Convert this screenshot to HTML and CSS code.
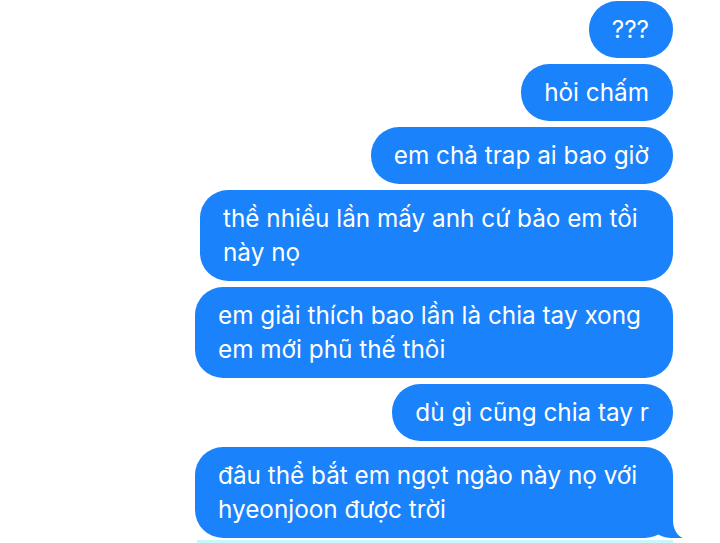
FILE: index.html
```html
<!DOCTYPE html>
<html lang="vi">
<head>
<meta charset="utf-8">
<title>Tin nhắn</title>
<link rel="stylesheet" href="styles.css">
</head>
<body>
<div class="thread">
  <div class="bubble">???</div>
  <div class="bubble">hỏi chấm</div>
  <div class="bubble">em chả trap ai bao giờ</div>
  <div class="bubble bubble-narrow">thề nhiều lần mấy anh cứ bảo em tồi này nọ</div>
  <div class="bubble">em giải thích bao lần là chia tay xong em mới phũ thế thôi</div>
  <div class="bubble">dù gì cũng chia tay r</div>
  <div class="bubble bubble-tail">đâu thể bắt em ngọt ngào này nọ với hyeonjoon được trời</div>
</div>
<div class="underline"></div>
</body>
</html>
```
FILE: styles.css
```css
html, body {
  margin: 0;
  padding: 0;
  background: #ffffff;
  width: 720px;
  height: 543px;
  overflow: hidden;
}
.thread {
  display: flex;
  flex-direction: column;
  align-items: flex-end;
  gap: 6px;
  padding: 1px 47px 0 0;
  font-family: Inter, "Noto Sans", sans-serif;
}
.bubble {
  position: relative;
  box-sizing: border-box;
  max-width: 478px;
  padding: 11px 24px 12px 23px;
  background: #1a82fb;
  color: #ffffff;
  font-size: 24.3px;
  line-height: 34px;
  border-radius: 28px;
}
.bubble-narrow {
  max-width: 473px;
}
.bubble-tail::before {
  content: "";
  position: absolute;
  right: -9px;
  bottom: 0;
  width: 28px;
  height: 30px;
  background: #1a82fb;
  border-bottom-left-radius: 18px 10px;
}
.bubble-tail::after {
  content: "";
  position: absolute;
  right: -24px;
  bottom: 0;
  width: 24px;
  height: 32px;
  background: #ffffff;
  border-bottom-left-radius: 12px 18px;
}
.underline {
  margin: 2px 47px 0 197px;
  height: 3px;
  background: #c8f6fb;
}
```
